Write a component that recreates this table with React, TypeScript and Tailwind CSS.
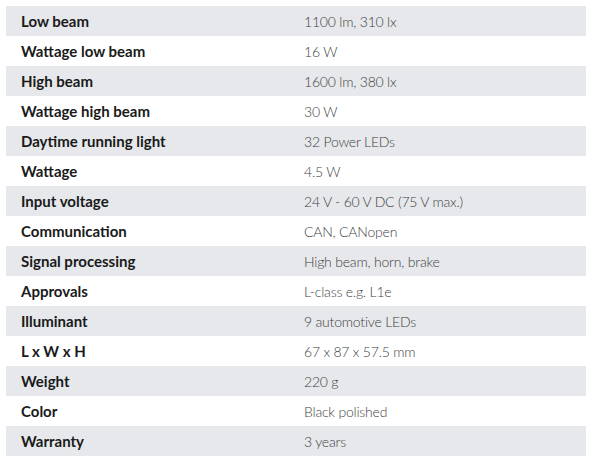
const specs: [string, string][] = [
  ['Low beam', '1100 lm, 310 lx'],
  ['Wattage low beam', '16 W'],
  ['High beam', '1600 lm, 380 lx'],
  ['Wattage high beam', '30 W'],
  ['Daytime running light', '32 Power LEDs'],
  ['Wattage', '4.5 W'],
  ['Input voltage', '24 V - 60 V DC (75 V max.)'],
  ['Communication', 'CAN, CANopen'],
  ['Signal processing', 'High beam, horn, brake'],
  ['Approvals', 'L-class e.g. L1e'],
  ['Illuminant', '9 automotive LEDs'],
  ['L x W x H', '67 x 87 x 57.5 mm'],
  ['Weight', '220 g'],
  ['Color', 'Black polished'],
  ['Warranty', '3 years'],
]

export default function App() {
  return (
    <div className="w-[592px] h-[463px] bg-white p-[6px] font-['Lato','Open_Sans',sans-serif] text-[15px]">
      <table className="w-[580px] border-collapse">
        <tbody>
          {specs.map(([label, value], i) => (
            <tr key={label} className={i % 2 === 0 ? 'bg-[#e6e8eb]' : 'bg-white'}>
              <td className="h-[30px] w-[283px] pl-[15px] font-bold text-[#1a1a1a]">{label}</td>
              <td className="h-[30px] pl-[15px] text-[14px] tracking-[-0.2px] font-light text-[#3f3f3f]">
                {value}
              </td>
            </tr>
          ))}
        </tbody>
      </table>
    </div>
  )
}
